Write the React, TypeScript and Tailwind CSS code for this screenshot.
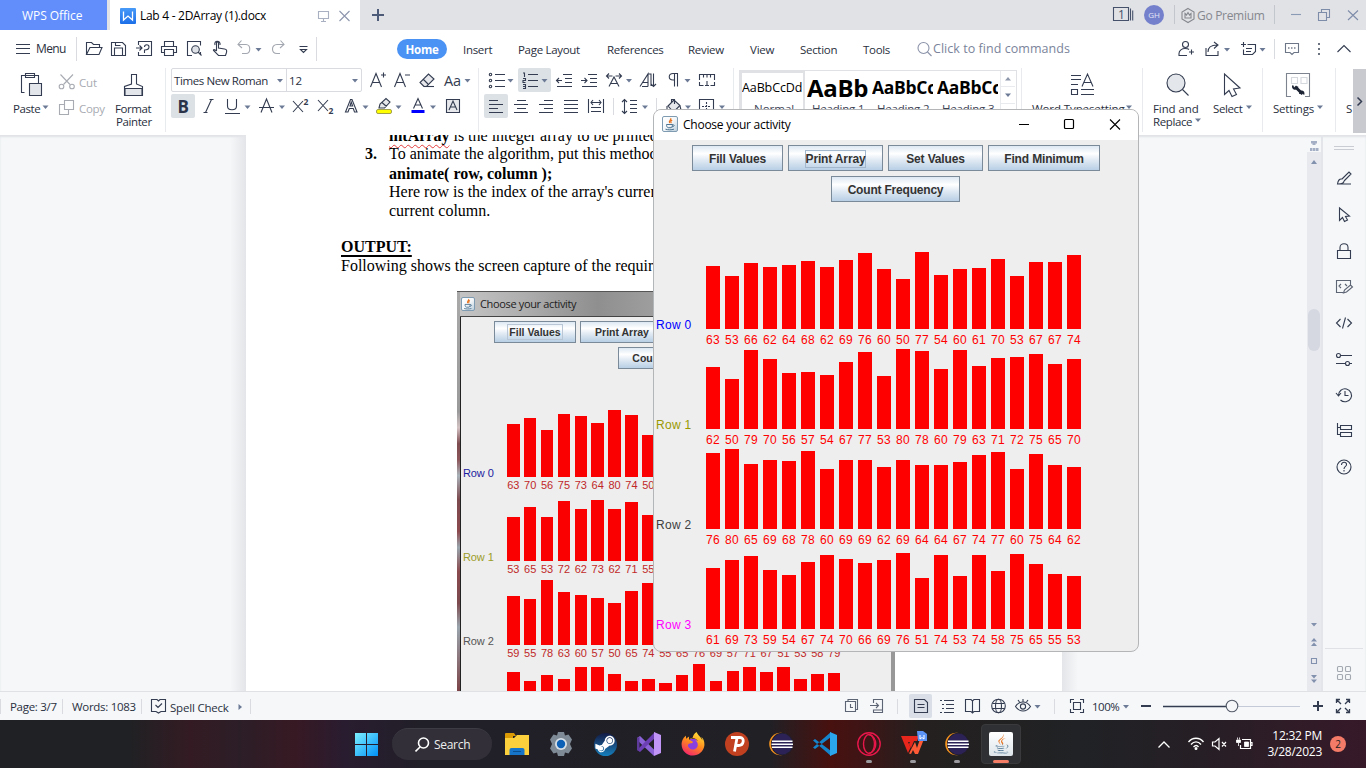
import React from "react";
import { FaSteamSymbol, FaFirefoxBrowser, FaJava } from "react-icons/fa";

type Kids = { c?: string; children?: React.ReactNode };

/* Icon canvas: one unit is one pixel, the height is that of the row it sits in. */
function S({ c = "", children }: Kids) {
  return (
    <svg className={"block flex-none overflow-visible " + c} fill="none" stroke="#333c50" strokeWidth="1.1">
      {children}
    </svg>
  );
}
function T({ c = "", children }: Kids) {
  return <span className={"block flex-none whitespace-pre " + c}>{children}</span>;
}
function Caret({ x, y }: { x: number; y: number }) {
  return <path d={`M${x - 3} ${y - 1.5}h6l-3 3.5z`} fill="#6c7a96" stroke="none" />;
}
function G({ x, y, s = 17, f = "#333c50", b, children }: { x: number; y: number; s?: number; f?: string; b?: boolean; children: React.ReactNode }) {
  return (
    <text x={x} y={y} fontSize={s} fill={f} stroke="none" fontFamily="'Open Sans','Noto Sans',sans-serif" fontWeight={b ? 700 : 400}>
      {children}
    </text>
  );
}
function Rule({ c = "" }: { c?: string }) {
  return <div className={"w-px flex-none bg-[#d9dbe0] " + c} />;
}

function JavaIcon({ c = "" }: { c?: string }) {
  return (
    <div className={"flex flex-none items-center justify-center rounded-[2px] border border-[#7e9bb2] bg-gradient-to-br from-white via-[#f4f7f9] to-[#bccfdc] " + c}>
      <svg viewBox="0 0 14 14" className="block h-full w-full" fill="none">
        <path d="M7.5 1.2c1.6 1.3-2.6 2.6-.8 4.8M9.2 3c-1.6.9-1.8 1.8-.9 3.2" stroke="#e8721c" strokeWidth="1.2" />
        <path d="M3.5 7.5h6c0 1.8-.6 3-1.5 3.2H5.2c-1.1-.2-1.7-1.4-1.7-3.2zM9.5 7.7c2.4-.2 2 2-.6 2.2M2.5 12.2c2.5.8 6 .8 8.5 0" stroke="#4c7391" strokeWidth="1" />
      </svg>
    </div>
  );
}

function TitleBar() {
  return (
    <div className="flex h-[30px] bg-[#e1e2e6] text-[12px] leading-[31px] text-[#1f2430]">
      <div className="w-[107px] bg-[#628efc] pl-[22px] text-white">
        <T c="tracking-[-0.05px]">WPS Office</T>
      </div>
      <div className="ml-[3px] flex w-[250px] bg-white">
        <div className="ml-[10px] mt-[8px] h-[16px] w-[16px] rounded-[1px] bg-gradient-to-b from-[#489af8] to-[#1c6ee8]">
          <svg className="block h-[16px] w-[16px]" fill="none" stroke="#fff" strokeWidth="1.3">
            <path d="M3.5 3.5v8.5l4.500-4 4.500 4V3.500" />
          </svg>
        </div>
        <T c="ml-[4px] w-[178px] tracking-[-0.28px] text-black">Lab 4 - 2DArray (1).docx</T>
        <S c="h-[30px] w-[21px]">
          <g stroke="#a9b0c2"><path d="M.5 11.500h10v7h-10zM3 21.500h5M5.500 18.500v3" /></g>
        </S>
        <S c="h-[30px] w-[12px]"><path d="M.5 11l10 10M10.500 11l-10 10" stroke="#8d96ad" /></S>
      </div>
      <S c="ml-[12px] h-[30px] w-[741px]"><path d="M0 15h12M6 9v12" stroke="#4d5a78" strokeWidth="2" /></S>
      <S c="h-[30px] w-[31px]">
        <path d="M.5 7.500h15v13h-15z" stroke="#45516b" /><path d="M17.500 8.500v12M19.700 10.500v10" stroke="#45516b" />
        <G x={5} y={18.5} s={12} f="#45516b">1</G>
      </S>
      <div className="mt-[5px] h-[20px] w-[20px] rounded-full bg-[#7480cc] text-center text-[8px] leading-[20px] text-[#e4e6f6]">GH</div>
      <Rule c="ml-[10px] mt-[5px] h-[19px] !bg-[#c3c6cd]" />
      <S c="ml-[6px] h-[30px] w-[16px]">
        <g stroke="#85888e"><path d="M7 8.500l6 3.500v7l-6 3.500-6-3.500v-7z" /><path d="M4 13.500l1.500 1.500L7 12.500 8.500 15l1.500-1.500v4.500H4z" /></g>
      </S>
      <T c="w-[77px] tracking-[-0.3px] text-[#85888e]">Go Premium</T>
      <Rule c="mt-[5px] h-[19px] !bg-[#c3c6cd]" />
      <S c="ml-[16px] h-[30px] w-[27px]"><path d="M0 14.500h10" stroke="#8b9ab5" /></S>
      <S c="h-[30px] w-[30px]"><path d="M.5 12.500h8v8h-8zM3.500 12.500v-3h8v8h-3" stroke="#7d8ca9" /></S>
      <S c="h-[30px] w-[12px]"><path d="M0 10.500l10 9.500M10 10.500l-10 9.500" stroke="#7d8ca9" /></S>
    </div>
  );
}

function MenuRow() {
  return (
    <div className="flex h-[36px] bg-white text-[11.5px] leading-[40px] text-[#2a3040]">
      <S c="ml-[16px] h-[36px] w-[20px]"><path d="M0 14.500h14M0 18.500h14M0 23.500h14" /></S>
      <T c="w-[40px] !leading-[38px] text-[12px] tracking-[-0.6px]">Menu</T>
      <Rule c="mt-[7px] h-[24px]" />
      <S c="ml-[9px] h-[36px] w-[25px]"><path d="M.5 24.500v-12h5l2 2h6v3M.5 24.500l3.500-7h12l-3 7z" /></S>
      <S c="h-[36px] w-[25px]"><path d="M.5 12.500h11l3 3v10h-14zM3.500 25v-7h8v7M4.500 12.500v3h5" /></S>
      <S c="h-[36px] w-[25px]"><path d="M2.500 15v-3.500h13v14h-13V22M0 18h6M3.500 15.500L6 18l-2.500 2.500M8.500 23v-3c3 0 4.500-1 4.500-3 0-3-4.500-3-4.500 0" /></S>
      <S c="h-[36px] w-[26px]"><path d="M3.500 16v-4.500h9V16M3 22.500H.5v-6h15v6H13M3.500 19.500h9v6h-9z" /></S>
      <S c="h-[36px] w-[26px]"><path d="M5 25.500H.5v-14h13v4M13.500 22v3" /><circle cx="8.5" cy="19.5" r="3.8" fill="#dfe2e6" /><path d="M11 22l3.500 3.500" /></S>
      <S c="h-[36px] w-[24px]"><path d="M3.500 21V13c0-1.500 2-1.500 2 0v5l6 1c2 .3 2.500 1.500 2 3.500l-1 3H5.500L.5 20.500c-.5-1 1-1.500 3 .5M2 15c-1.500-5 6-5 5 0" /></S>
      <S c="h-[36px] w-[34px]"><path d="M4.500 10.500l-3.500 4 4 3.500M1 14.500h8c5 0 5 9 0 9H5" stroke="#a3a7af" /><Caret x={21.5} y={19.5} /></S>
      <S c="h-[36px] w-[27px]"><path d="M9.500 10.500l3.500 4-4 3.500M13 14.500H6c-6 0-6 9 0 9h3" stroke="#a3a7af" /></S>
      <S c="h-[36px] w-[18px]"><path d="M1.500 16.500h8M2.500 19.500l3 3 3-3z" /></S>
      <Rule c="mt-[7px] h-[24px]" />
      <div className="ml-[80px] mt-[9px] h-[20px] w-[50px] rounded-full bg-[#4a92f3] text-center font-bold leading-[22px] tracking-[-0.2px] text-white">Home</div>
      <T c="ml-[16px] w-[55px] tracking-[-0.3px]">Insert</T>
      <T c="w-[89px] tracking-[-0.3px]">Page Layout</T>
      <T c="w-[81px] tracking-[-0.3px]">References</T>
      <T c="w-[62px] tracking-[-0.3px]">Review</T>
      <T c="w-[50px] tracking-[-0.2px]">View</T>
      <T c="w-[63px] tracking-[-0.3px]">Section</T>
      <T c="w-[54px] tracking-[-0.3px]">Tools</T>
      <S c="h-[36px] w-[16px]"><g stroke="#8b93a9"><circle cx="6.5" cy="18" r="5.5" /><path d="M10.500 22l4 4" /></g></S>
      <T c="w-[245px] !leading-[37px] text-[12.5px] tracking-[0.04px] text-[#7b849b]">Click to find commands</T>
      <S c="h-[36px] w-[27px]"><circle cx="7.5" cy="14.5" r="3" /><path d="M9 25.500H1v-2c0-3 3-5 6-5 2 0 3 0 4 1M11 22h5M13.500 19.500v5" /></S>
      <S c="h-[36px] w-[36px]"><path d="M1 18v7.500h12V21M3 22c0-5 4-7 9-7M9 12l4 3-4 3.500" /><Caret x={22} y={19.5} /></S>
      <S c="h-[36px] w-[33px]"><path d="M0 14.500h5M2.500 12v5M6.500 14.500h8v7l-3 3h-9v-5M5 18.500h6M5 21.500h5" /><Caret x={21.5} y={19.5} /></S>
      <Rule c="mt-[9px] h-[20px]" />
      <S c="ml-[10px] h-[36px] w-[33px]"><path d="M.5 13.500h13v9H9l-2 2-2-2H.5z" stroke="#6d7687" /><path d="M3 18h8" strokeDasharray="1.5 1.5" /></S>
      <S c="h-[36px] w-[19px]"><path d="M0 13h2v2H0zM0 18h2v2H0zM0 23h2v2H0z" fill="#6b7280" stroke="none" /></S>
      <S c="h-[36px] w-[16px]"><path d="M.5 22L7 15.500l6.500 6.500" /></S>
    </div>
  );
}

function FontGroup() {
  return (
    <div className="flex w-[307px] flex-none flex-col">
      <div className="flex h-[26px]">
        <div className="mt-[2px] flex h-[24px] w-[191px] flex-none rounded-[2px] border border-[#d9dbe0] text-[11.5px] leading-[23px] text-[#2a3040]">
          <T c="w-[115px] border-r border-[#d9dbe0] pl-[2px] tracking-[-0.4px]">Times New Roman</T>
          <T c="pl-[2px]">12</T>
        </div>
        <S c="h-[26px] w-[8px]"><Caret x={-82} y={14.5} /><Caret x={-7} y={14.5} /></S>
        <S c="h-[26px] w-[24px]"><path d="M.5 21L6 7.500 11.500 21M2.500 16.500h7M11 9h5M13.500 6.500v5" /></S>
        <S c="h-[26px] w-[25px]"><path d="M.5 21L6 7.500 11.500 21M2.500 16.500h7M11 9h5" /></S>
        <S c="h-[26px] w-[25px]"><path d="M5 20.500l-4-4 8.500-8.500 5.500 5-7.500 7.500zM4 13l5 5" fill="#e6e8eb" /><path d="M5 20.500h10" /></S>
        <S c="h-[26px] w-[35px]"><G x={0} y={20} s={14.5}>Aa</G><Caret x={23.5} y={14.5} /></S>
      </div>
      <div className="flex h-[26px]">
        <div className="mt-[2px] h-[24px] w-[24px] flex-none rounded-[2px] bg-[#dce1e6] text-center text-[17px] font-bold leading-[25px] text-[#2a3347]">B</div>
        <S c="ml-[8px] h-[26px] w-[22px]"><path d="M6.500 7.500h4M.5 20.500h4M8.500 7.500l-6 13" /></S>
        <S c="h-[26px] w-[34px]"><path d="M2.500 7v7c0 5 9 5 9 0V7M0 21.500h15" /><Caret x={22.5} y={15} /></S>
        <S c="h-[26px] w-[33px]"><path d="M2 20.500L7.500 7 13 20.500M0 15.500h15" /><Caret x={23} y={15} /></S>
        <S c="h-[26px] w-[26px]"><path d="M1 9l10 11M11 9L1 20" /><G x={11.5} y={13} s={8.5} b>2</G></S>
        <S c="h-[26px] w-[27px]"><path d="M0 8l10 11M10 8L0 19" /><G x={10.5} y={22} s={8.5} b>2</G></S>
        <S c="h-[26px] w-[31px]"><path d="M.5 20L5.500 7.500h1.500L12 20H9.500l-1.200-3.500H4.300L3 20zM5 14h2.600L6.200 10z" /><Caret x={20.5} y={15} /></S>
        <S c="h-[26px] w-[36px]"><path d="M3 16l1-4 6-5.500 4 3.500-5.500 6zM6 10.500l4.500 4" fill="#e6e8eb" /><rect x=".5" y="17.5" width="15" height="4" rx="1.5" fill="#ffff00" stroke="#8d8a3a" strokeWidth=".8" /><Caret x={22.5} y={15} /></S>
        <S c="h-[26px] w-[35px]"><path d="M1.500 16.500L6 6.500l4.500 10M3 13h6" /><path d="M-.5 18h13v3h-13z" fill="#0000ff" stroke="none" /><Caret x={21} y={15} /></S>
        <S c="h-[26px] w-[16px]"><path d="M-.5 7.500h13v13h-13z" fill="#e6e8eb" /><path d="M2 18l4-9 4 9M3.500 15h5" /></S>
      </div>
    </div>
  );
}

function ParagraphGroup() {
  return (
    <div className="flex w-[254px] flex-none flex-col">
      <div className="flex h-[26px]">
        <S c="ml-[10px] h-[26px] w-[29px]">
          <path d="M6 8.500h10M6 14.500h10M6 20.500h10" /><circle cx="1.5" cy="8.5" r="1.2" /><circle cx="1.5" cy="14.5" r="1.2" /><circle cx="1.5" cy="20.5" r="1.2" /><Caret x={21.5} y={14.5} />
        </S>
        <div className="mt-[2px] h-[24px] w-[33px] flex-none rounded-[2px] bg-[#dce1e6]">
          <S c="h-[24px] w-[33px]"><path d="M10 6.500h10M10 12.500h10M10 18.500h10M5 5h1.500v4M5 10.500h2.500v2H5v2h2.500M5 16.500h2.500v4H5M5 18.500h2" /><Caret x={26.5} y={12.5} /></S>
        </div>
        <S c="ml-[5px] h-[26px] w-[25px]"><path d="M0 14.500h6M3 12l-2.500 2.500L3 17M7 8.500h9M9 12.500h7M9 16.500h7M1 20.500h15" /></S>
        <S c="h-[26px] w-[25px]"><path d="M0 14.500h6M3.500 12L6 14.500 3.500 17M7 8.500h9M9 12.500h7M9 16.500h7M1 20.500h15" /></S>
        <S c="h-[26px] w-[34px]"><path d="M3 20.500L8 11l5 9.500M5 17.500h6M.5 10h6M9.500 10h6M3 7.500L.5 10 3 12.500M13 7.500l2.500 2.500-2.500 2.500" /><Caret x={23} y={14.5} /></S>
        <S c="h-[26px] w-[28px]"><path d="M0 20.500L8 8v12.500M3 16.500h5M2 20.500h6M13.500 7.500v13M11 18l2.500 2.500L16 18M8 8h3v12" /></S>
        <S c="h-[26px] w-[31px]"><path d="M10 7.500H5c-5 0-5 6.500 0 6.500h1M6.500 7.500v13M9.500 7.500v13" /><Caret x={19.5} y={14.5} /></S>
        <S c="h-[26px] w-[17px]"><path d="M.5 14V8.500h15V14M4.500 8.500v3M8 8.500v3M11.500 8.500v3M.5 16v3.500h4M15.500 16v3.500h-4M8 15v5M6 19.500h4" /></S>
      </div>
      <div className="flex h-[26px]">
        <div className="ml-[5px] mt-[2px] h-[24px] w-[24px] flex-none rounded-[2px] bg-[#dce1e6]">
          <S c="h-[24px] w-[24px]"><path d="M5 6.500h9M5 10.500h14M5 14.500h9M5 18.500h14" /></S>
        </div>
        <S c="ml-[6px] h-[26px] w-[25px]"><path d="M3 8.500h9M0 12.500h14M3 16.500h9M0 20.500h14" /></S>
        <S c="h-[26px] w-[25px]"><path d="M5 8.500h9M0 12.500h14M5 16.500h9M0 20.500h14" /></S>
        <S c="h-[26px] w-[24px]"><path d="M0 8.500h14M0 12.500h14M0 16.500h14M0 20.500h14" /></S>
        <S c="h-[26px] w-[25px]"><path d="M.5 7v14M15.500 7v14M3 10.500h10M5 8l-2 2.500L5 13M11 8l2 2.500-2 2.500M3 15.500h10M3 19.500h10" /></S>
        <Rule c="mt-[6px] h-[17px]" />
        <S c="ml-[8px] h-[26px] w-[34px]"><path d="M2.500 7.500v14M0 10l2.500-2.500L5 10M0 19l2.500 2.500L5 19M8 8.500h7M8 12.500h7M8 16.500h7M8 20.500h7" /><Caret x={23} y={15} /></S>
        <Rule c="mt-[6px] h-[17px]" />
        <S c="ml-[9px] h-[26px] w-[33px]"><path d="M2 14l6-6 6 5.500-6.500 6.500zM5.500 10V7.500h3V12" fill="#e6e8eb" /><path d="M1 14v5M14 14l1 4" /><Caret x={22} y={15} /></S>
        <S c="h-[26px] w-[17px]"><path d="M.5 7.500h14v14H.5z" /><path d="M7.500 10v9M3 14.500h9" strokeDasharray="2 1" /><Caret x={23} y={15} /></S>
      </div>
    </div>
  );
}

function Heading({ sample, name }: { sample: string; name: string }) {
  return (
    <div className="w-[65px] flex-none overflow-hidden pl-[2px]">
      <T c={(name === "Heading 1" ? "text-[24px] " : "text-[17.5px] ") + "h-[31px] overflow-hidden font-bold leading-[33px] text-black w-[61px] tracking-[-0.3px]"}>{sample}</T>
      <T c="pl-[5px] text-[11.5px] leading-[14px] text-[#3b4254]">{name}</T>
    </div>
  );
}

function Ribbon() {
  return (
    <div className="flex h-[69px] overflow-hidden bg-white text-[11.5px] leading-[13px] tracking-[-0.2px] text-[#2a3040]">
      <div className="ml-[13px] w-[46px] flex-none">
        <S c="h-[36px] w-[30px]"><path d="M11.500 26.500h-3v-17h17v8M12.500 9.500v-2h9v4h-9z" /><path d="M16.500 17.500h12v12h-12z" fill="#e3e6ea" /></S>
        <div className="flex"><T c="w-[28px] tracking-[-0.4px]">Paste</T><S c="h-[13px] w-[8px]"><Caret x={4.5} y={5} /></S></div>
      </div>
      <div className="w-[55px] flex-none text-[#a8abb2]">
        <div className="flex h-[30px]">
          <S c="h-[30px] w-[20px]"><g stroke="#a8abb2"><path d="M1.500 8.500l9.500 10M14 8.500l-9.500 10" /><circle cx="2.5" cy="20.5" r="2.3" /><circle cx="13" cy="20.5" r="2.3" /></g></S>
          <T c="leading-[34px]">Cut</T>
        </div>
        <div className="flex h-[26px]">
          <S c="h-[26px] w-[20px]"><g stroke="#a8abb2"><path d="M5.500 4.500h9v9h-9z" /><path d="M5.500 8.500h-5v10h9v-5" /></g></S>
          <T c="leading-[26px] tracking-[-0.3px]">Copy</T>
        </div>
      </div>
      <div className="w-[51px] flex-none">
        <S c="h-[36px] w-[40px]"><path d="M17.500 18v-9.500h5V18l6 2.500v9h-18v-9z" /><path d="M11 22.500h17v7H11z" fill="#e3e6ea" /></S>
        <T c="pl-px tracking-[-0.4px]">Format</T>
        <T c="pl-[2px] tracking-[-0.4px]">Painter</T>
      </div>
      <Rule c="mt-[2px] h-[64px] !bg-[#e9eaed]" />
      <div className="w-[5px] flex-none" />
      <FontGroup />
      <Rule c="mt-[2px] h-[64px] !bg-[#e9eaed]" />
      <ParagraphGroup />
      <Rule c="mt-[2px] h-[64px] !bg-[#e9eaed]" />
      <div className="ml-[5px] mt-[4px] flex h-[70px] w-[278px] flex-none border border-[#dfe1e5]">
        <div className="w-[65px] flex-none overflow-hidden border-2 border-[#dfe1e5]">
          <T c="h-[29px] w-[61px] overflow-hidden text-[12.5px] leading-[30px] tracking-[-0.1px] text-black">AaBbCcDd</T>
          <T c="pl-[12px] leading-[14px] tracking-[0px] text-[#3b4254]">Normal</T>
        </div>
        <Heading sample="AaBb" name="Heading 1" />
        <Heading sample="AaBbCc" name="Heading 2" />
        <Heading sample="AaBbCc" name="Heading 3" />
        <div className="w-[15px] flex-none border-l border-[#e9eaed]">
          <div className="h-[16px] border-b border-[#e9eaed]"><S c="h-[15px] w-[14px]"><path d="M4 9.500h6l-3-3.500z" fill="#8e98ac" stroke="none" /></S></div>
          <div className="h-[17px] border-b border-[#e9eaed]"><S c="h-[15px] w-[14px]"><Caret x={7} y={8} /></S></div>
        </div>
      </div>
      <Rule c="ml-[4px] mt-[2px] h-[64px] !bg-[#e9eaed]" />
      <div className="ml-[10px] w-[110px] flex-none">
        <S c="h-[36px] w-[80px]"><path d="M39 9.500h10M39 13.500h10M39 18.500h7M39.500 23.500h6v5h-6zM49 23.500h13M49 28.500h13M50 20.500L55.500 8l5.500 12.500M52 16.500h7" /></S>
        <div className="flex"><T c="w-[93px] tracking-[-0.1px]">Word Typesetting</T><S c="h-[13px] w-[8px]"><Caret x={4} y={5} /></S></div>
      </div>
      <Rule c="mt-[2px] h-[64px] !bg-[#e9eaed]" />
      <div className="ml-[10px] w-[60px] flex-none">
        <S c="h-[36px] w-[50px]"><circle cx="23" cy="17" r="9" fill="#e3e6ea" /><path d="M29.500 23.500l6 6" /></S>
        <T c="tracking-[-0.1px]">Find and</T>
        <div className="flex"><T c="w-[42px] tracking-[-0.4px]">Replace</T><S c="h-[13px] w-[8px]"><Caret x={3} y={5} /></S></div>
      </div>
      <div className="w-[49px] flex-none">
        <S c="h-[36px] w-[40px]"><path d="M11.500 8v20.500l4.500-4 3 6 4.500-2-3-5.500 6.500-1z" /></S>
        <div className="flex"><T c="w-[32px] tracking-[-0.4px]">Select</T><S c="h-[13px] w-[8px]"><Caret x={4} y={5} /></S></div>
      </div>
      <Rule c="mt-[2px] h-[64px] !bg-[#e9eaed]" />
      <div className="ml-[10px] w-[62px] flex-none">
        <S c="h-[36px] w-[50px]"><path d="M18 30.500h-4.500v-23h23v23H32" stroke="#7d838f" /><path d="M18.500 11.500h6v6h-6zM28 11.500h6v6h-6z" stroke="#d5d8dd" /><path d="M22 20.500l7.500 7.500" strokeWidth="3" stroke="#1d2433" /><path d="M20 19.500c-1 4 4 4.500 4.500 1M27 28c0-4 4-3 3.500.5" strokeWidth="1.8" stroke="#1d2433" /></S>
        <div className="flex"><T c="w-[44px]">Settings</T><S c="h-[13px] w-[8px]"><Caret x={3} y={5} /></S></div>
      </div>
      <Rule c="mt-[2px] h-[64px] !bg-[#e9eaed]" />
      <T c="ml-[10px] w-[7px] pt-[36px]">S</T>
      <div className="mt-[3px] h-[64px] w-[13px] flex-none bg-[#c9cad0]"><S c="h-[64px] w-[13px]"><path d="M4.500 28.500l4 4-4 4" strokeWidth="1.5" /></S></div>
    </div>
  );
}

const small = [
  { label: "Row 0", color: "text-[#1c1ca0]", v: [63, 70, 56, 75, 73, 64, 80, 74, 50] },
  { label: "Row 1", color: "text-[#9c9c28]", v: [53, 65, 53, 72, 62, 73, 62, 71, 55] },
  { label: "Row 2", color: "text-[#555555]", v: [59, 55, 78, 63, 60, 57, 50, 65, 74, 55, 65, 76, 69, 57, 71, 67, 51, 53, 58, 79] },
  { label: "", color: "", v: [68, 58, 65, 60, 74, 74, 66, 58, 60, 55, 65, 78, 58, 70, 75, 69, 74, 60, 66, 67] },
];

const big = [
  { label: "Row 0", color: "text-[#0000ff]", v: [63, 53, 66, 62, 64, 68, 62, 69, 76, 60, 50, 77, 54, 60, 61, 70, 53, 67, 67, 74] },
  { label: "Row 1", color: "text-[#999900]", v: [62, 50, 79, 70, 56, 57, 54, 67, 77, 53, 80, 78, 60, 79, 63, 71, 72, 75, 65, 70] },
  { label: "Row 2", color: "text-[#404040]", v: [76, 80, 65, 69, 68, 78, 60, 69, 69, 62, 69, 64, 64, 67, 74, 77, 60, 75, 64, 62] },
  { label: "Row 3", color: "text-[#ff00ff]", v: [61, 69, 73, 59, 54, 67, 74, 70, 66, 69, 76, 51, 74, 53, 74, 58, 75, 65, 55, 53] },
];

const swing = "flex-none border border-[#7a8a99] bg-[linear-gradient(180deg,#dde8f3_0%,#ffffff_32%,#dfe9f3_60%,#b8cfe5_100%)] text-center font-['Liberation_Sans',sans-serif] font-bold text-[#333333] ";

function Picture() {
  return (
    <div className="ml-[211px] mt-[16px] flex h-[400px] w-[438px] overflow-hidden border-t border-[#555] bg-[#eeeeee] font-['Liberation_Sans',sans-serif]">
      <div className="w-[3px] flex-none bg-[linear-gradient(180deg,#a9a9a9_0%,#9a9a9a_30%,#d3c2c4_34%,#7e4c50_38%,#8c5559_42%,#a9b2b9_46%,#7c4a4e_52%,#8c4a4e_60%,#99a5ad_64%,#8a4a4e_70%,#7c4a4e_78%,#9aa5ad_84%,#7c4448_100%)]" />
      <div className="w-[430px] flex-none">
        <div className="flex h-[25px] border-b border-[#444] bg-[linear-gradient(90deg,#c4c4c4_0%,#aeaeae_15%,#a0a0a0_22%,#8f8f8f_32%,#9e9e9e_45%,#8a8a8a_100%)]">
          <JavaIcon c="ml-px mt-[5px] h-[14px] w-[14px]" />
          <T c="ml-[5px] font-['Open_Sans',sans-serif] text-[11px] leading-[24px] tracking-[-0.35px] text-[#222]">Choose your activity</T>
        </div>
        <div className="h-[399px] w-[430px] border-l border-[#222]">
          <div className="flex gap-[4px] pl-[33px] pt-[4px] text-[10.5px] leading-[20px]">
            <div className={swing + "h-[22px] w-[82px]"}><span className="border border-[#b9c6d6] px-px py-px">Fill Values</span></div>
            <div className={swing + "h-[22px] w-[84px]"}>Print Array</div>
          </div>
          <div className="pl-[157px] pt-[4px] text-[10.5px] leading-[20px]">
            <div className={swing + "h-[22px] w-[115px]"}>Count Frequency</div>
          </div>
          <div className="mt-[33px]">
            {small.map((r, k) => (
              <div key={k} className="flex h-[84.2px]">
                <T c={"w-[46px] pl-[2px] pt-[62px] text-[11px] leading-[18px] tracking-[-0.1px] " + r.color}>{r.label}</T>
                <div className="flex gap-[4.4px]">
                  {r.v.map((n, i) => (
                    <div key={i} className="flex w-[12.5px] flex-none flex-col items-center">
                      <div className="flex h-[75px] w-[12.5px] flex-none items-end"><div className="w-full bg-[#fb0000]" style={{ height: n * 0.84 }} /></div>
                      {k < 3 && <T c="pt-[2px] text-[11px] leading-[13px] text-[#c02828]">{n}</T>}
                    </div>
                  ))}
                </div>
              </div>
            ))}
          </div>
        </div>
      </div>
      <div className="ml-px w-[4px] flex-none bg-[#989898]" />
    </div>
  );
}

function SideBar() {
  return (
    <div className="flex w-[59px] flex-none">
      <div className="flex w-[14px] flex-none flex-col">
        <S c="h-[17px] w-[14px]"><path d="M4 6h6v2.500H8.500V10h-3V8.500H4zM3 13h2.500v3H3zM6 13h2.500v3H6zM9 13h2.500v3H9z" fill="#a4aec4" stroke="none" /></S>
        <div className="flex-1 bg-[#e8e9ef]">
          <S c="h-[157px] w-[14px]"><path d="M4 12h6l-3-4z" fill="#8291ad" stroke="none" /></S>
          <div className="ml-px h-[42px] w-[12px] rounded-full bg-[#d5d8e0]" />
          <S c="h-[100px] w-[14px]">
            <path d="M4 272h6l-3 3.500zM4 290.500h6l-3-3.500zM4 295h6l-3-3.500zM4 324h6l-3 3.500zM4 328.500h6l-3 3.500z" fill="#8291ad" stroke="none" /><path d="M4.500 307.500h5v5h-5z" stroke="#8291ad" />
          </S>
        </div>
      </div>
      <div className="w-[2px] flex-none bg-[#e3e5ea]" />
      <div className="flex w-[42px] flex-col items-center">
        <S c="h-[26px] w-[20px]"><path d="M0 11.500h20M0 14.500h20" stroke="#c9ccd2" /></S>
        <S c="h-[36px] w-[16px]"><path d="M6 18l7-7 2 2-7 7M6 18c-3-.5-4 2-4.500 5H15M2 23c3 0 6 0 6-3" /></S>
        <S c="h-[36px] w-[16px]"><path d="M3.500 11v12.500l3-3 2 4 3-1.500-2-3.500 4-.5z" /></S>
        <S c="h-[36px] w-[16px]"><path d="M1.500 17.500h13v8h-13zM4 17.500v-3c0-5 8-5 8 0v3" /></S>
        <S c="h-[36px] w-[16px]"><path d="M7 23.500H.5v-12h14v4M5 15l-2 2 2 2M9 15l2 2M7.500 24l1-3 6-5 2 2-6 5z" stroke="#5d6473" /></S>
        <S c="h-[36px] w-[16px]"><path d="M4.500 14L.5 18l4 4M11.500 14l4 4-4 4M9.500 12.500l-3 11" /></S>
        <S c="h-[36px] w-[16px]"><path d="M5 14.500h11M0 22.500h9M14 22.500h2" /><circle cx="2.5" cy="14.5" r="2" /><circle cx="11.5" cy="22.5" r="2" /></S>
        <S c="h-[36px] w-[16px]"><path d="M2.500 18.500a6.500 6.500 0 1 1 2 4.500M0 16l2.500 3L5 16M9 14v4.500h3.500" /></S>
        <S c="h-[36px] w-[16px]"><path d="M1.500 10v11.500h3M1.500 14.500h3M4.500 12.500h11v4h-11zM4.500 19.500h11v4h-11z" /></S>
        <S c="h-[36px] w-[16px]"><circle cx="8" cy="18" r="7" /><path d="M5.500 16c0-4 5.500-3.500 5 0-.3 1.500-2.500 1.500-2.500 4M8 21v1.500" /></S>
        <div className="mt-[163px] h-px w-[38px] bg-[#dfe1e6]" />
        <S c="h-[36px] w-[16px]"><g stroke="#a4a9b1"><rect x="1.5" y="17.5" width="5" height="5" rx="1" /><rect x="9.5" y="17.5" width="5" height="5" rx="1" /><rect x="1.5" y="25.5" width="5" height="5" rx="1" /><rect x="9.5" y="25.5" width="5" height="5" rx="1" /></g></S>
      </div>
    </div>
  );
}

function DocumentArea() {
  return (
    <div className="flex h-[556px] overflow-hidden bg-[#f5f7f9] shadow-[inset_0_2px_2px_#e0e2e5]">
      <div className="w-[246px] flex-none bg-[linear-gradient(90deg,transparent_230px,#e3e5e8_246px)]" />
      <div className="w-[816px] flex-none overflow-hidden bg-white font-['Liberation_Serif',serif] text-[16px] leading-[18px] text-black">
        <div className="-mt-[8px] ml-[143px]">
          <T><b className="underline decoration-[#e23b3b] decoration-wavy decoration-[1px] underline-offset-[3px]">intArray</b> is the integer array to be printed.</T>
          <div className="-ml-[24px] flex"><T c="w-[24px] font-bold">3.</T><T>To animate the algorithm, put this method call</T></div>
          <T c="pt-[2px] font-bold">animate( row, column );</T>
          <T>Here row is the index of the array's current row</T>
          <T c="pt-px">current column.</T>
        </div>
        <T c="ml-[95px] mt-[18px] font-bold underline decoration-2 underline-offset-[3px]">OUTPUT:</T>
        <T c="ml-[95px] pt-px">Following shows the screen capture of the required output</T>
        <Picture />
      </div>
      <div className="w-[245px] flex-none bg-[linear-gradient(90deg,#e3e5e8_0,transparent_16px)]" />
      <SideBar />
    </div>
  );
}

function StatusBar() {
  return (
    <div className="flex h-[29px] border-t border-[#dfe1e5] bg-[#f5f7f9] text-[11.5px] leading-[29px] tracking-[-0.3px] text-[#2a3040]">
      <Rule c="mt-[7px] h-[15px]" />
      <T c="ml-[9px] w-[52px]">Page: 3/7</T>
      <Rule c="mt-[7px] h-[15px]" />
      <T c="ml-[9px] w-[69px]">Words: 1083</T>
      <Rule c="mt-[7px] h-[15px]" />
      <S c="ml-[9px] h-[28px] w-[19px]"><path d="M6 7.500H.5v12H5l2.500 1.500L10 19.500h4.500v-12H9L7.500 9 6 7.500M4.500 13l2.500 2.500 4-4" /></S>
      <T c="w-[67px] !leading-[32px] tracking-[-0.2px]">Spell Check</T>
      <S c="h-[28px] w-[13px]"><path d="M1.500 12v6l3.500-3z" fill="#6c7a96" stroke="none" /></S>
      <Rule c="mt-[7px] h-[15px]" />
      <S c="ml-[594px] h-[28px] w-[25px]"><path d="M.5 9.500h10v10H.5zM3 9V7.500h9.500v10H11M5.500 12v3.500H8" stroke="#5d6473" /></S>
      <S c="h-[28px] w-[27px]"><path d="M3.500 11V7.500h9v13h-9v-3M0 13.500h8M6 11l2.500 2.500L6 16M3.500 18h9" stroke="#5d6473" /></S>
      <Rule c="mt-[7px] h-[15px]" />
      <div className="ml-[11px] mt-[2px] h-[24px] w-[23px] flex-none rounded-[2px] bg-[#d9dee7]"><S c="h-[24px] w-[23px]"><path d="M5.500 5.500h10l3 3v10h-13zM8.500 10.500h7M8.500 13.500h7" /></S></div>
      <S c="ml-[8px] h-[28px] w-[25px]"><path d="M4 8.500h10M6 12.500h8M6 16.500h8M4 20.500h10" /><path d="M0 8.500h2M2 12.500h2M2 16.500h2M0 20.500h2" /></S>
      <S c="h-[28px] w-[26px]"><path d="M.5 7.500h5.500l1.500 1.500L9 7.500h5.500v12H9L7.500 21 6 19.500H.5zM7.500 9v12" /></S>
      <S c="h-[28px] w-[24px]"><circle cx="7.5" cy="14" r="6.8" /><ellipse cx="7.5" cy="14" rx="3" ry="6.8" /><path d="M1.500 11.500h12M1.500 16.500h12" /></S>
      <S c="h-[28px] w-[39px]"><path d="M.5 14.500c4-6 11-6 15 0-4 6-11 6-15 0zM8 7v2.500M3 8l1.500 2M13 8l-1.500 2" /><circle cx="8" cy="14.5" r="2.6" /><Caret x={22.5} y={14.5} /></S>
      <Rule c="mt-[7px] h-[15px]" />
      <S c="ml-[15px] h-[28px] w-[22px]"><path d="M.5 11V7.500H4M10 7.500h3.500V11M13.500 17v3.500H10M4 20.500H.5V17M3.500 10.500h7v7h-7z" /></S>
      <T c="w-[49px] tracking-[-0.5px]">100%</T>
      <S c="h-[28px] w-[22px]"><Caret x={-15} y={14.5} /><path d="M0 14h10" strokeWidth="2" /></S>
      <S c="h-[28px] w-[150px]"><path d="M0 14.500h69" strokeWidth="1.3" /><path d="M69 14.500h68" stroke="#c5cad9" /><circle cx="69" cy="14" r="5.8" fill="#f5f7f9" stroke="#555c69" /></S>
      <S c="h-[28px] w-[23px]"><path d="M0 14h10M5 9v10" strokeWidth="2" /></S>
      <S c="h-[28px] w-[15px]"><path d="M.5 11V7.500H4M1 8l4 4M10 7.500h3.500V11M13 8l-4 4M.5 17v3.500H4M1 20l4-4M13.500 17v3.500H10M13 20l-4-4" strokeWidth="1.3" /></S>
    </div>
  );
}

function Eclipse() {
  return (
    <svg viewBox="0 0 24 24" className="block h-[24px] w-[24px]">
      <circle cx="11.5" cy="12" r="11.3" fill="#f7941e" /><circle cx="13.2" cy="12" r="11.2" fill="#221f2c" /><circle cx="13.2" cy="12" r="10.4" fill="#2c2255" />
      <path d="M3 8.500h20.500v1.600H3zM2.500 11.500H24v1.600H2.500zM3 14.500h20.500v1.600H3z" fill="#fff" />
    </svg>
  );
}

function TaskItem({ children, dot }: { children: React.ReactNode; dot?: boolean }) {
  return (
    <div className="flex h-[48px] w-[44px] flex-none flex-col items-center">
      <div className="mt-[12px] flex h-[24px] w-[24px] items-center justify-center">{children}</div>
      {dot && <div className="mt-[4px] h-[3px] w-[6px] rounded-full bg-[#9b9b9f]" />}
    </div>
  );
}

function TaskBar() {
  return (
    <div className="flex h-[48px] bg-[linear-gradient(90deg,#202124_0,#202124_130px,#341b23_190px,#2c1e27_240px,#371923_295px,#291c30_345px,#211f28_420px,#212025_770px,#47110f_830px,#3f1415_860px,#24201f_920px,#202225_1080px,#261f25_1200px,#371929_1366px)]">
      <svg className="ml-[355px] mt-[13px] block h-[23px] w-[23px] flex-none">
        <defs><linearGradient id="win" gradientUnits="userSpaceOnUse" x1="0" y1="0" x2="23" y2="23"><stop offset="0" stopColor="#7df0ff" /><stop offset="1" stopColor="#0090f8" /></linearGradient></defs>
        <path d="M0 0h11v11H0zM12 0h11v11H12zM0 12h11v11H0zM12 12h11v11H12z" fill="url(#win)" />
      </svg>
      <div className="ml-[14px] mt-[8px] flex h-[32px] w-[100px] flex-none rounded-full border-t border-[#3d3b44] bg-[#322f38]">
        <svg className="ml-[23px] block h-[32px] w-[19px]" fill="none" stroke="#fff" strokeWidth="1.6"><circle cx="8.5" cy="14" r="5" /><path d="M5 18l-4.500 4.500" /></svg>
        <T c="text-[12px] font-medium leading-[32px] tracking-[-0.3px] text-[#eeeeee]">Search</T>
      </div>
      <div className="ml-[3px] flex">
        <TaskItem>
          <svg viewBox="0 0 24 24" className="h-[24px] w-[24px]"><path d="M0 2q0-1 1-1h8l2 3h-3v6H0z" fill="#d99a05" /><path d="M0 6h9l3-3h12v20H0z" fill="#fccf3c" /><path d="M4.500 23v-5q0-2 2-2h11q2 0 2 2v5z" fill="#1675c8" /><path d="M8 19.500h8" stroke="#0a4f90" /></svg>
        </TaskItem>
        <TaskItem>
          <svg viewBox="0 0 24 24" className="h-[24px] w-[24px]"><path d="M9 0h6l1 3.500 3.500-1 3.500 5-2 4.500 2 4.500-3.500 5-3.500-1L15 24H9l-1-3.500-3.500 1L1 16.500 3 12 1 7.500l3.500-5 3.500 1z" fill="#7e8a95" /><circle cx="12" cy="12" r="6" fill="#d7dfe6" /><circle cx="12" cy="12" r="4.2" fill="#0c60b5" /></svg>
        </TaskItem>
        <TaskItem>
          <div className="flex h-[23px] w-[23px] items-center justify-center rounded-full bg-gradient-to-b from-[#101b45] to-[#1380bd] text-white"><FaSteamSymbol size={22} /></div>
        </TaskItem>
        <TaskItem>
          <svg viewBox="0 0 24 24" className="h-[24px] w-[24px]"><path d="M0 6l3-2 14 13.500V24L0 8z" fill="#8b63d6" /><path d="M0 18l3 2L18 6V0z" fill="#6d3fb5" /><path d="M0 6v12l2.500 1V5z" fill="#5e3a9b" /><path d="M17 0l7 3v18l-7 3z" fill="#c195f7" /></svg>
        </TaskItem>
        <TaskItem>
          <svg className="absolute h-0 w-0"><defs><linearGradient id="ff" x1=".8" y1="0" x2=".3" y2="1"><stop offset="0" stopColor="#ffe83a" /><stop offset=".5" stopColor="#ff8a1d" /><stop offset="1" stopColor="#f5246c" /></linearGradient></defs></svg>
          <div className="flex h-[24px] w-[24px] items-center justify-center bg-[radial-gradient(circle_at_12px_13px,#8a3fe0_6px,transparent_6.5px)]"><FaFirefoxBrowser size={24} fill="url(#ff)" /></div>
        </TaskItem>
        <TaskItem>
          <svg viewBox="0 0 24 24" className="h-[24px] w-[24px]"><circle cx="12" cy="12" r="12" fill="#c04020" /><path d="M6 5.500h9c5 0 4 8-1.500 8H11" fill="none" stroke="#fff" strokeWidth="2.8" /><path d="M12 6L9.500 19.500" stroke="#fff" strokeWidth="2.8" /></svg>
        </TaskItem>
        <TaskItem><Eclipse /></TaskItem>
        <TaskItem>
          <svg viewBox="0 0 24 24" className="h-[24px] w-[24px]"><path d="M0 8.500L2 7l16 12v5zM0 15.500L2 17 18 5V0z" fill="#1484cc" /><path d="M17 0l7 3v18l-7 3z" fill="#2ba5ec" /></svg>
        </TaskItem>
        <TaskItem dot>
          <svg viewBox="0 0 24 24" className="h-[24px] w-[24px]" fill="none" stroke="#e8174b" strokeWidth="1.4"><circle cx="12" cy="12" r="11.2" /><ellipse cx="12" cy="12" rx="5.5" ry="9.5" /><path d="M12 2.500c9 2 9 17 0 19" /></svg>
        </TaskItem>
        <TaskItem dot>
          <svg viewBox="0 0 24 24" className="h-[24px] w-[24px] overflow-visible"><path d="M0 4h18l-2 5h-3l-3 7-2-4 1-2H7l2.500 5.500L7 21z" fill="#e8261c" /><path d="M8 21.500L14 10l2 6 3-9h4l-6 15h-3l-2-4-2 4z" fill="#ff5a36" /><path d="M16-1h6l4 3v7H17z" fill="#5b93f5" /><path d="M19 3v4l2-1.500L23 7V3" stroke="#fff" fill="none" /></svg>
        </TaskItem>
        <TaskItem dot><Eclipse /></TaskItem>
        <div className="ml-[2px] mt-[4px] flex h-[40px] w-[40px] flex-none flex-col items-center rounded-[4px] border border-[#3a3a3d] bg-[#2f3033]">
          <div className="mt-[7px] flex h-[24px] w-[24px] flex-none items-center justify-center rounded-[2px] bg-gradient-to-b from-white to-[#dde5ea] text-[#4c7391]">
            <svg className="absolute h-0 w-0"><defs><linearGradient id="jv" x1="0" y1="0" x2="0" y2="1"><stop offset=".52" stopColor="#e8721c" /><stop offset=".53" stopColor="#4c7391" /></linearGradient></defs></svg>
            <FaJava size={20} fill="url(#jv)" />
          </div>
          <div className="mt-[4px] h-[3px] w-[16px] flex-none rounded-full bg-[#f47d66]" />
        </div>
      </div>
      <S c="ml-[137px] h-[48px] w-[30px]"><path d="M.5 27.500L6 22l5.500 5.500" stroke="#fff" strokeWidth="1.3" /></S>
      <S c="h-[48px] w-[24px]"><g stroke="#fff" strokeWidth="1.4"><path d="M.5 22c4-5 11-5 15 0M3 24.500c3-3.500 7-3.500 10 0M5.500 27c2-2 3.500-2 5 0" /><circle cx="8" cy="28.5" r=".8" fill="#fff" /></g></S>
      <S c="h-[48px] w-[24px]"><path d="M.5 22v4h2.500l4 3.500v-11L3 22zM10 22l4 4.500M14 22l-4 4.500" stroke="#fff" strokeWidth="1.2" /></S>
      <S c="h-[48px] w-[30px]"><path d="M6 19.500h8.500v9H4.500V25M14.500 22.500h1.500v3h-1.500" stroke="#fff" strokeWidth="1.2" /><path d="M.5 20h4v2.500h-4zM1.500 17.500v2M3.500 17.500v2M2.500 23v3M8.500 22h4v4.500h-4z" fill="#fff" stroke="#fff" strokeWidth=".8" /></S>
      <div className="flex w-[56px] flex-none flex-col items-end pt-[8px] text-[12px] leading-[16px] tracking-[-0.25px] text-white"><T>12:32 PM</T><T>3/28/2023</T></div>
      <div className="ml-[8px] mt-[16px] h-[16px] w-[16px] flex-none rounded-full bg-[#f47b67] text-center text-[10px] leading-[16px] text-[#222]">2</div>
    </div>
  );
}

function ActivityWindow() {
  return (
    <div className="absolute left-[653px] top-[109px] h-[543px] w-[486px] overflow-hidden rounded-[8px] border border-[#b4b5b7] bg-[#eeeeee] font-['Liberation_Sans',sans-serif]">
      <div className="flex h-[30px] bg-white">
        <JavaIcon c="ml-[8px] mt-[6px] h-[16px] w-[16px]" />
        <T c="ml-[5px] w-[336px] font-['Open_Sans',sans-serif] text-[12px] leading-[30px] tracking-[-0.25px] text-black">Choose your activity</T>
        <S c="h-[30px] w-[45px]"><path d="M0 14.500h10" stroke="#000" /></S>
        <S c="h-[30px] w-[46px]"><rect x=".5" y="9.5" width="9" height="9" rx="1" stroke="#000" strokeWidth="1.2" /></S>
        <S c="h-[30px] w-[10px]"><path d="M0 9.500l10 10M10 9.500l-10 10" stroke="#000" /></S>
      </div>
      <div className="flex gap-[5px] pl-[38px] pt-[5px] text-[12px] leading-[26px] tracking-[-0.15px]">
        <div className={swing + "h-[26px] w-[91px]"}>Fill Values</div>
        <div className={swing + "h-[26px] w-[95px]"}><span className="border border-[#a3b8cc] px-0 py-px">Print Array</span></div>
        <div className={swing + "h-[26px] w-[95px]"}>Set Values</div>
        <div className={swing + "h-[26px] w-[112px]"}>Find Minimum</div>
      </div>
      <div className="pl-[177px] pt-[5px] text-[12px] leading-[26px] tracking-[-0.2px]">
        <div className={swing + "h-[26px] w-[129px]"}>Count Frequency</div>
      </div>
      <div className="mt-[44px]">
        {big.map((r) => (
          <div key={r.label} className="flex h-[100px]">
            <T c={"w-[52px] pl-[2px] pt-[71px] text-[12px] leading-[16px] tracking-[0.3px] " + r.color}>{r.label}</T>
            <div className="flex gap-[5px]">
              {r.v.map((n, i) => (
                <div key={i} className="w-[14px] flex-none">
                  <div className="flex h-[83px] items-end"><div className="w-full bg-[#ff0000]" style={{ height: n }} /></div>
                  <T c="pt-[4px] text-[12px] leading-[15px] tracking-[0.3px] text-[#ff0000]">{n}</T>
                </div>
              ))}
            </div>
          </div>
        ))}
      </div>
    </div>
  );
}

export default function App() {
  return (
    <div className="relative h-[768px] w-[1366px] overflow-hidden bg-white font-['Open_Sans','Noto_Sans',sans-serif]">
      <TitleBar />
      <MenuRow />
      <Ribbon />
      <DocumentArea />
      <StatusBar />
      <TaskBar />
      <ActivityWindow />
    </div>
  );
}
